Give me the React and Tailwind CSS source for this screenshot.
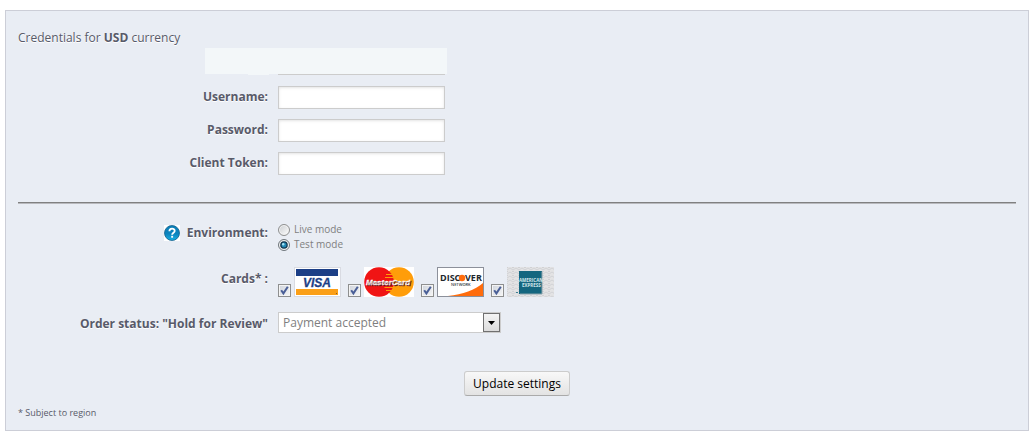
import { useState } from 'react';

const labelClass = 'text-right text-[12px] leading-5 font-bold text-[#585a69] [text-shadow:0_1px_0_#fff]';

function Field({ id, label, type = 'text' }) {
  return (
    <div className="grid grid-cols-[250px_1fr] gap-x-[10px]">
      <label htmlFor={id} className={`pt-px ${labelClass}`}>{label}</label>
      <input
        id={id}
        type={type}
        className="h-[23px] w-[167px] border border-[#cccccc] bg-white px-1 text-[12px] text-[#7f7f7f] shadow-[inset_0_1px_3px_#e4e4e4] outline-none"
      />
    </div>
  );
}

function Radio({ label, value, current, onChange }) {
  return (
    <label className="flex h-[15px] items-center gap-1 text-[10px] leading-[15px] text-[#7f7f7f]">
      <span className="relative h-3 w-3">
        <input
          type="radio"
          name="environment"
          value={value}
          checked={current === value}
          onChange={() => onChange(value)}
          className="peer block h-3 w-3 appearance-none rounded-full border border-[#8e8f8f] bg-linear-to-br from-[#c9cccf] to-white shadow-[inset_0_0_0_1px_#f4f4f4] checked:border-[#70777c]"
        />
        <svg viewBox="0 0 12 12" className="pointer-events-none absolute inset-0 hidden h-3 w-3 peer-checked:block" aria-hidden="true">
          <circle cx="6" cy="6" r="3.8" fill="#12364f" />
          <circle cx="6" cy="6" r="2.5" fill="#2289b5" />
          <circle cx="5.2" cy="5.2" r="1.2" fill="#a5e1f5" />
        </svg>
      </span>
      {label}
    </label>
  );
}

function Card({ name, children }) {
  return (
    <label className="flex items-end gap-[3px]">
      <span className="relative h-[13px] w-[13px]">
        <input
          type="checkbox"
          defaultChecked
          aria-label={name}
          className="peer block h-[13px] w-[13px] appearance-none border border-[#8e8f8f] bg-linear-to-br from-[#cfd4dc] to-[#f6f6f6] shadow-[inset_0_0_0_1px_#f4f4f4]"
        />
        <svg viewBox="0 0 13 13" className="pointer-events-none absolute inset-0 hidden h-[13px] w-[13px] peer-checked:block" aria-hidden="true">
          <path d="M3.2 6.2 L5.4 9.4 L9.8 2.8" fill="none" stroke="#4a5f97" strokeWidth="2" />
        </svg>
      </span>
      {children}
    </label>
  );
}

function Visa() {
  return (
    <svg viewBox="0 0 47 30" className="h-[30px] w-[47px]" aria-hidden="true">
      <rect x="0.5" y="0.5" width="46" height="29" fill="#fff" stroke="#d9dbe2" />
      <rect x="2" y="2" width="42" height="7" fill="#1c3f86" />
      <rect x="2" y="22" width="42" height="6" fill="#fb9f17" />
      <text x="9" y="20" fontFamily="Liberation Sans, sans-serif" fontSize="12" fontWeight="700" fontStyle="italic" fill="#1c3f86" stroke="#1c3f86" strokeWidth="0.3">VISA</text>
      <rect x="42" y="26" width="1" height="1" fill="#7b5a2a" />
    </svg>
  );
}

function MasterCard() {
  return (
    <svg viewBox="0 0 50 30" className="h-[30px] w-[50px]" aria-hidden="true">
      <rect width="50" height="30" fill="#fff" />
      <circle cx="35" cy="15" r="14.8" fill="#ff9d0a" />
      <circle cx="15" cy="15" r="14.8" fill="#f01414" />
      <path d="M22 7.5h6M21 10.5h8M20.5 20.5h9M22 23.5h6" stroke="#ff9d0a" strokeWidth="1.2" />
      <text x="2" y="18" fontFamily="Liberation Sans, sans-serif" fontSize="8" fontWeight="700" fontStyle="italic" fill="#fff" stroke="#fff" strokeWidth="0.3" className="[text-shadow:1px_1px_0_#5d1919]">MasterCard</text>
    </svg>
  );
}

function Discover() {
  return (
    <svg viewBox="0 0 47 30" className="h-[30px] w-[47px]" aria-hidden="true">
      <rect x="0.5" y="0.5" width="46" height="29" fill="#fff" stroke="#8c909a" />
      <path d="M11 29 C26 27.5 38 23 46 16 V29 Z" fill="#ff6c0c" />
      <text x="3" y="14" fontFamily="Open Sans, sans-serif" fontSize="9" fontWeight="700" fill="#20262c">DISC</text>
      <circle cx="25" cy="11" r="3.2" fill="#ff6c0c" />
      <text x="28" y="14" fontFamily="Open Sans, sans-serif" fontSize="9" fontWeight="700" fill="#20262c">VER</text>
      <text x="14" y="19" fontFamily="Open Sans, sans-serif" fontSize="4" fontWeight="600" fill="#30363c">NETWORK</text>
    </svg>
  );
}

function Amex() {
  return (
    <svg viewBox="0 0 47 30" className="h-[30px] w-[47px]" aria-hidden="true">
      <defs>
        <pattern id="guilloche" width="6" height="4" patternUnits="userSpaceOnUse">
          <path d="M0 3 L3 1 L6 3 M0 1 L1 0 M5 0 L6 1" fill="none" stroke="#cccdd0" strokeWidth="0.8" />
        </pattern>
      </defs>
      <rect width="47" height="30" fill="#e3e3e4" />
      <rect width="47" height="30" fill="url(#guilloche)" />
      <rect x="12" y="4" width="23" height="23" fill="#14667f" />
      <path d="M35 4.5v22.5h-22" fill="none" stroke="#8aa2ab" />
      <text x="12" y="15" fontFamily="Open Sans, sans-serif" fontSize="4.5" fontWeight="700" fill="#d5e8ec">AMERICAN</text>
      <text x="15" y="20" fontFamily="Open Sans, sans-serif" fontSize="4.5" fontWeight="700" fill="#d5e8ec">EXPRESS</text>
      <rect x="9" y="25" width="2" height="1" fill="#3f7f92" />
    </svg>
  );
}

function HelpIcon() {
  return (
    <svg viewBox="0 0 16 16" className="h-4 w-4" role="img" aria-label="Help">
      <defs>
        <linearGradient id="help" x1="0" y1="0" x2="0" y2="1">
          <stop offset="0" stopColor="#0b7fb8" />
          <stop offset="0.55" stopColor="#0c83bd" />
          <stop offset="1" stopColor="#19b1e4" />
        </linearGradient>
      </defs>
      <rect width="16" height="16" fill="#fff" />
      <circle cx="8" cy="8" r="7.5" fill="url(#help)" stroke="#14608c" strokeWidth="0.8" />
      <path d="M5.4 6.2 C5.4 2.9 10.8 2.9 10.7 6 C10.6 7.8 8.2 7.8 8.1 9.7" fill="none" stroke="#fff" strokeWidth="1.8" />
      <rect x="7.2" y="10.8" width="1.9" height="1.9" fill="#fff" />
    </svg>
  );
}

export default function App() {
  const [environment, setEnvironment] = useState('test');

  return (
    <form
      onSubmit={(e) => e.preventDefault()}
      className="mx-[5px] mt-[10px] border border-[#ccced7] bg-[#e9edf4] px-3 pt-[17px] pb-[11px] font-['Open_Sans',sans-serif] text-[12px] text-[#585a69]"
    >
      <p className="leading-5 [text-shadow:0_1px_0_#fff]">
        Credentials for <strong className="font-bold">USD</strong> currency
      </p>

      <div className="ml-[187px] w-[242px]">
        <div className="h-[26px] bg-[#f3f7f9]" />
        <div className="flex h-px">
          <div className="ml-[43px] w-[21px] bg-[#f3f7f9]" />
          <div className="ml-[9px] w-[167px] bg-[#cccccc]" />
        </div>
      </div>

      <div className="mt-[11px] flex flex-col gap-[10px]">
        <Field id="username" label="Username:" />
        <Field id="password" label="Password:" type="password" />
        <Field id="client-token" label="Client Token:" />
      </div>

      <hr className="mt-[27px] h-[2px] border-t border-b border-t-[#808080] border-b-[#b8b9bd]" />

      <div role="radiogroup" aria-labelledby="environment-label" className="mt-[18px] grid grid-cols-[250px_1fr] gap-x-[10px]">
        <div className="flex items-start justify-end gap-[7px]">
          <span className="pt-[3px]"><HelpIcon /></span>
          <span id="environment-label" className={`pt-px ${labelClass}`}>Environment:</span>
        </div>
        <div>
          <Radio label="Live mode" value="live" current={environment} onChange={setEnvironment} />
          <Radio label="Test mode" value="test" current={environment} onChange={setEnvironment} />
        </div>
      </div>

      <div role="group" aria-labelledby="cards-label" className="mt-[15px] grid grid-cols-[250px_1fr] gap-x-[10px]">
        <span id="cards-label" className={`pt-0.5 ${labelClass}`}>Cards* :</span>
        <div className="flex items-end gap-[7px]">
          <Card name="Visa"><Visa /></Card>
          <Card name="MasterCard"><MasterCard /></Card>
          <Card name="Discover"><Discover /></Card>
          <Card name="American Express"><Amex /></Card>
        </div>
      </div>

      <div className="mt-[15px] grid grid-cols-[250px_1fr] gap-x-[10px]">
        <label htmlFor="order-status" className={`pt-0.5 ${labelClass}`}>Order status: "Hold for Review"</label>
        <div className="relative w-[223px]">
          <select
            id="order-status"
            className="block h-[21px] w-full appearance-none border border-[#cccccc] bg-white pl-1 text-[12px] leading-[19px] text-[#7f7f7f] outline-none"
          >
            <option>Payment accepted</option>
          </select>
          <span className="pointer-events-none absolute top-px right-px flex h-[19px] w-[17px] items-center justify-center border border-[#707070] bg-linear-to-b from-[#f4f4f4] to-[#dcdcdc]">
            <svg viewBox="0 0 7 4" className="h-1 w-[7px]" aria-hidden="true">
              <path d="M0 0h7L3.5 4z" fill="#000" />
            </svg>
          </span>
        </div>
      </div>

      <div className="mt-[37px] flex justify-center">
        <button
          type="submit"
          className="h-[25px] rounded-[3px] border border-[#cccccc] border-b-[#aaaaaa] bg-linear-to-b from-[#f8f8f8] to-[#e3e3e3] px-2 text-[12px] leading-[23px] text-black"
        >
          Update settings
        </button>
      </div>

      <p className="mt-[11px] text-[9px] leading-3">* Subject to region</p>
    </form>
  );
}
